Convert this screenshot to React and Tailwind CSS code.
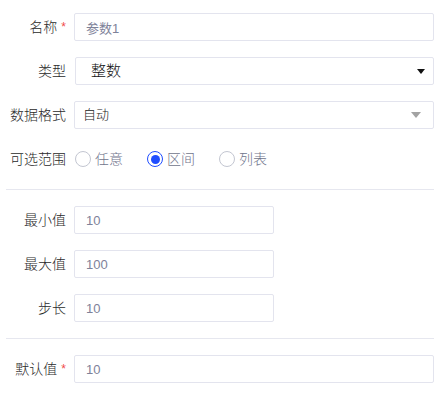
import React, { useState } from 'react';

const font = { fontFamily: '"Liberation Sans", "Noto Sans CJK SC", sans-serif' };

const Label = ({ text, required }) => (
  <div className="w-[60px] shrink-0 mr-[8px] flex items-center justify-end text-[14px] font-light text-[#2a2a2a]">
    <span>{text}</span>
    {required && <span className="ml-[4px] text-[12px] text-[#f04a4a] leading-none">*</span>}
  </div>
);

const Row = ({ children }) => <div className="flex items-center h-[28px]">{children}</div>;

const Radio = ({ label, checked, onClick }) => (
  <button type="button" onClick={onClick} className="flex items-center mr-[24px]">
    <span
      className={
        checked
          ? 'w-[16px] h-[16px] rounded-full border border-[#1f4dff] flex items-center justify-center'
          : 'w-[16px] h-[16px] rounded-full border border-[#c3c6d1]'
      }
    >
      {checked && <span className="w-[9px] h-[9px] rounded-full bg-[#1f4dff]" />}
    </span>
    <span className="ml-[4px] text-[14px] font-light text-[#6f748c]">{label}</span>
  </button>
);

const inputCls =
  'h-[28px] border border-[#e3e4ee] rounded-[2px] px-[11px] text-[13px] text-[#7e8299] outline-none bg-white';

export default function App() {
  const [range, setRange] = useState('interval');

  return (
    <div className="w-[446px] h-[393px] bg-white pl-[6px] pr-[12px] pt-[13px]" style={font}>
      <div className="flex flex-col gap-[16px]">
        <Row>
          <Label text="名称" required />
          <input className={inputCls + ' flex-1 text-[12px]'} defaultValue="参数1" />
        </Row>
        <Row>
          <Label text="类型" />
          <div className="flex-1 ml-[1px] h-[28px] border border-[#e3e4ee] rounded-[2px] flex items-center justify-between pl-[15px] pr-[8px]">
            <span className="text-[15px] font-light text-[#111]">整数</span>
            <svg width="8" height="5" viewBox="0 0 8 5">
              <path d="M0 0h8L4 5z" fill="#111" />
            </svg>
          </div>
        </Row>
        <Row>
          <Label text="数据格式" />
          <div className="flex-1 h-[28px] border border-[#e3e4ee] rounded-[2px] flex items-center justify-between pl-[8px] pr-[12px]">
            <span className="text-[13px] font-light text-[#222]">自动</span>
            <svg width="10" height="6" viewBox="0 0 10 6">
              <path d="M0 0h10L5 6z" fill="#a3a3a3" />
            </svg>
          </div>
        </Row>
        <Row>
          <Label text="可选范围" />
          <div className="flex items-center ml-[1px]">
            <Radio label="任意" checked={range === 'any'} onClick={() => setRange('any')} />
            <Radio label="区间" checked={range === 'interval'} onClick={() => setRange('interval')} />
            <Radio label="列表" checked={range === 'list'} onClick={() => setRange('list')} />
          </div>
        </Row>
      </div>

      <div className="h-px bg-[#e6e7ef] mt-[16px] mb-[16px]" />

      <div className="flex flex-col gap-[16px]">
        <Row>
          <Label text="最小值" />
          <input className={inputCls + ' w-[200px]'} defaultValue="10" />
        </Row>
        <Row>
          <Label text="最大值" />
          <input className={inputCls + ' w-[200px]'} defaultValue="100" />
        </Row>
        <Row>
          <Label text="步长" />
          <input className={inputCls + ' w-[200px]'} defaultValue="10" />
        </Row>
      </div>

      <div className="h-px bg-[#e6e7ef] mt-[16px] mb-[16px]" />

      <Row>
        <Label text="默认值" required />
        <input className={inputCls + ' flex-1'} defaultValue="10" />
      </Row>
    </div>
  );
}
